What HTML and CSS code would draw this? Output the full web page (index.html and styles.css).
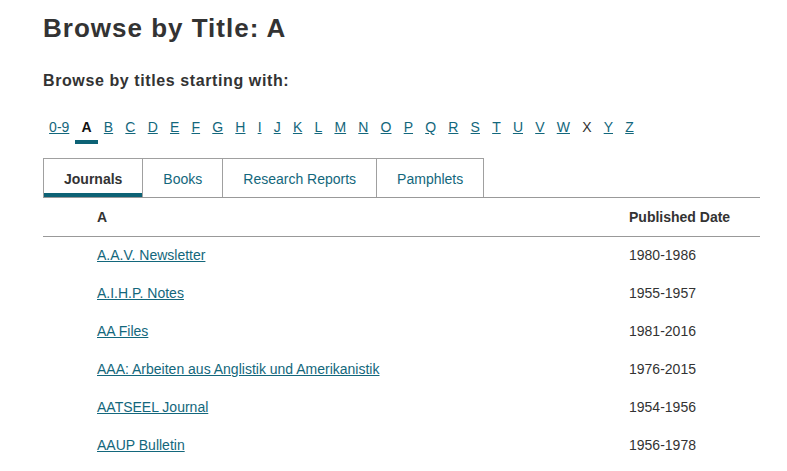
FILE: index.html
```html
<!DOCTYPE html>
<html lang="en">
<head>
<meta charset="utf-8">
<title>Browse by Title: A</title>
<link rel="stylesheet" href="styles.css">
</head>
<body>
<main class="page">
  <h1 class="title">Browse by Title: A</h1>
  <h2 class="subtitle">Browse by titles starting with:</h2>
  <nav class="letters">
    <a class="letter" href="#">0-9</a>
    <span class="letter active">A</span>
    <a class="letter" href="#">B</a>
    <a class="letter" href="#">C</a>
    <a class="letter" href="#">D</a>
    <a class="letter" href="#">E</a>
    <a class="letter" href="#">F</a>
    <a class="letter" href="#">G</a>
    <a class="letter" href="#">H</a>
    <a class="letter" href="#">I</a>
    <a class="letter" href="#">J</a>
    <a class="letter" href="#">K</a>
    <a class="letter" href="#">L</a>
    <a class="letter" href="#">M</a>
    <a class="letter" href="#">N</a>
    <a class="letter" href="#">O</a>
    <a class="letter" href="#">P</a>
    <a class="letter" href="#">Q</a>
    <a class="letter" href="#">R</a>
    <a class="letter" href="#">S</a>
    <a class="letter" href="#">T</a>
    <a class="letter" href="#">U</a>
    <a class="letter" href="#">V</a>
    <a class="letter" href="#">W</a>
    <span class="letter plain">X</span>
    <a class="letter" href="#">Y</a>
    <a class="letter" href="#">Z</a>
  </nav>
  <div class="tabs">
    <span class="tab active">Journals</span>
    <a class="tab" href="#">Books</a>
    <a class="tab" href="#">Research Reports</a>
    <a class="tab" href="#">Pamphlets</a>
  </div>
  <div class="table">
    <div class="row head">
      <div class="cell name">A</div>
      <div class="cell date">Published Date</div>
    </div>
    <div class="row">
      <div class="cell name"><a href="#">A.A.V. Newsletter</a></div>
      <div class="cell date">1980-1986</div>
    </div>
    <div class="row">
      <div class="cell name"><a href="#">A.I.H.P. Notes</a></div>
      <div class="cell date">1955-1957</div>
    </div>
    <div class="row">
      <div class="cell name"><a href="#">AA Files</a></div>
      <div class="cell date">1981-2016</div>
    </div>
    <div class="row">
      <div class="cell name"><a href="#">AAA: Arbeiten aus Anglistik und Amerikanistik</a></div>
      <div class="cell date">1976-2015</div>
    </div>
    <div class="row">
      <div class="cell name"><a href="#">AATSEEL Journal</a></div>
      <div class="cell date">1954-1956</div>
    </div>
    <div class="row">
      <div class="cell name"><a href="#">AAUP Bulletin</a></div>
      <div class="cell date">1956-1978</div>
    </div>
  </div>
</main>
</body>
</html>
```
FILE: styles.css
```css
html, body {
  margin: 0;
  padding: 0;
  background: #ffffff;
}

body {
  font-family: "Liberation Sans", Arial, Helvetica, sans-serif;
  color: #333333;
  font-size: 14px;
  line-height: 20px;
}

.page {
  width: 717px;
  padding: 13px 0 0 43px;
}

.title {
  margin: 0;
  font-size: 26px;
  line-height: 30px;
  font-weight: bold;
  letter-spacing: 1px;
  color: #333333;
}

.subtitle {
  margin: 28px 0 0;
  font-size: 16px;
  line-height: 20px;
  font-weight: bold;
  letter-spacing: 0.6px;
  color: #333333;
}

.letters {
  display: flex;
  margin-top: 26px;
}

.letter {
  padding: 0 6.1px 3px;
  border-bottom: 4px solid transparent;
  color: #13677c;
  text-decoration: underline;
}

.letter.active {
  font-weight: bold;
  color: #111111;
  text-decoration: none;
  border-bottom-color: #0d6275;
}

.letter.plain {
  color: #333333;
  text-decoration: none;
}

.tabs {
  display: flex;
  margin-top: 14px;
  border-bottom: 1px solid #999999;
}

.tab {
  padding: 10px 20px 8px;
  border: 1px solid #a0a0a0;
  border-bottom: none;
  color: #13677c;
  text-decoration: none;
}

.tab + .tab {
  border-left: none;
}

.tab.active {
  font-weight: bold;
  color: #333333;
  box-shadow: inset 0 -4px 0 #0d6275;
}

.row {
  display: grid;
  grid-template-columns: 1fr 131px;
}

.row.head {
  font-weight: bold;
  border-bottom: 1px solid #999999;
}

.cell {
  padding-top: 8px;
  padding-bottom: 10px;
}

.row.head .cell {
  padding-top: 9px;
  padding-bottom: 9px;
}

.cell.name {
  padding-left: 54px;
}

.cell a {
  color: #13677c;
  text-decoration: underline;
}
```
